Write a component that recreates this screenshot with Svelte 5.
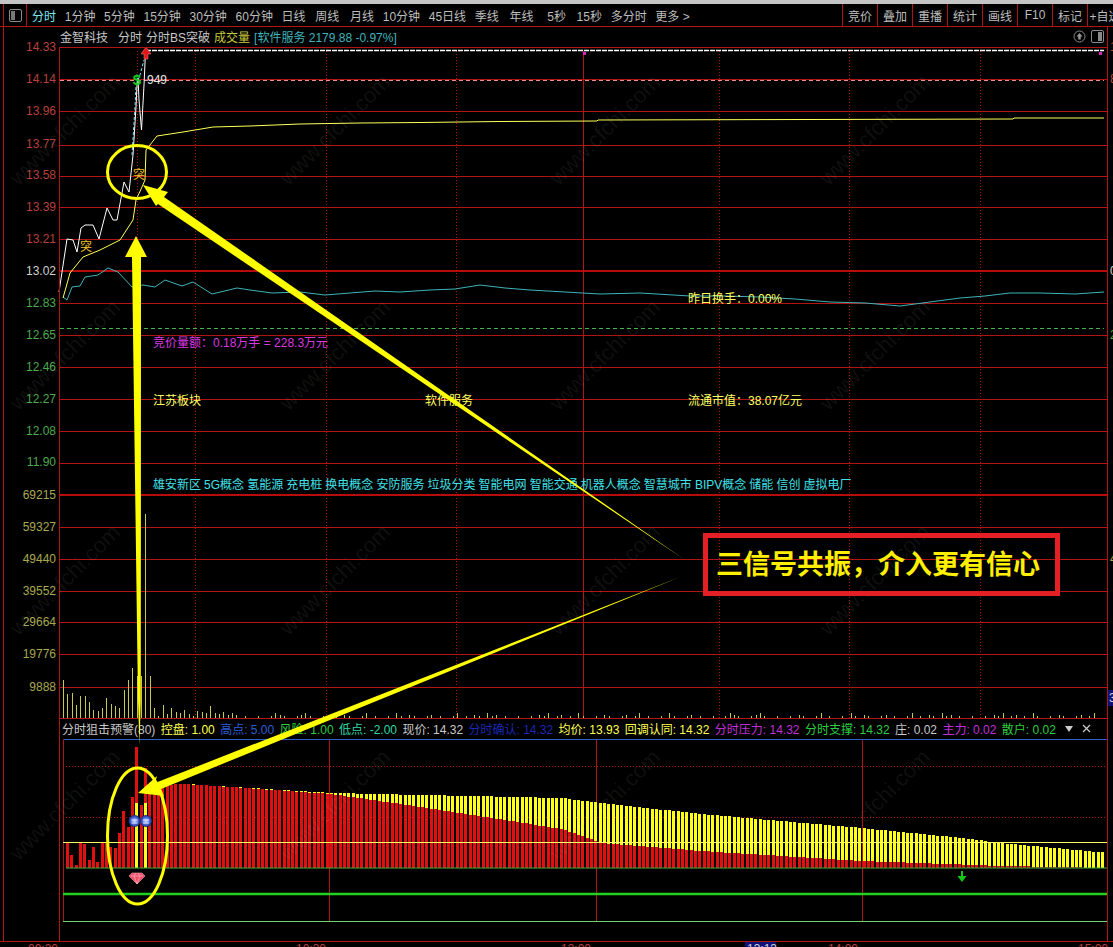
<script>
  const tabs = ["分时", "1分钟", "5分钟", "15分钟", "30分钟", "60分钟", "日线", "周线", "月线", "10分钟", "45日线", "季线", "年线", "5秒", "15秒", "多分时", "更多 >"];
  const tools = ["竞价", "叠加", "重播", "统计", "画线", "F10", "标记", "+自选"];

  const axis = [
    ["14.33", 51, "up"], ["14.14", 83, "up"], ["13.96", 115, "up"], ["13.77", 148, "up"],
    ["13.58", 179, "up"], ["13.39", 211, "up"], ["13.21", 243, "up"], ["13.02", 275, "flat"],
    ["12.83", 307, "down"], ["12.65", 339, "down"], ["12.46", 371, "down"], ["12.27", 403, "down"],
    ["12.08", 435, "down"], ["11.90", 466, "down"], ["69215", 499, "vol"], ["59327", 531, "vol"],
    ["49440", 563, "vol"], ["39552", 595, "vol"], ["29664", 626, "vol"], ["19776", 658, "vol"], ["9888", 691, "vol"]
  ];
  const rows = [79, 111, 145, 176, 207, 239, 303, 335, 367, 399, 431, 463, 527, 559, 591, 622, 654, 687];
  const dotted = [195, 326, 456, 719, 849, 980];

  const pts = (list) => list.map((p) => p.join(",")).join(" ");

  const price = pts([[59, 292], [67, 239], [73, 240], [77, 252], [81, 228], [85, 225], [93, 225], [99, 239], [107, 208], [113, 220], [117, 220], [124, 182], [129, 192], [133, 155], [136, 107], [137, 85], [138, 78], [139, 100], [141.5, 130], [144, 85], [145.5, 52]]);
  const avg = pts([[63, 298], [70, 273], [83, 257], [100, 250], [120, 240], [133, 220], [136, 200], [142, 187], [145, 180], [146, 150], [157, 136], [183, 132], [213, 127], [250, 126], [300, 124], [360, 123], [420, 122.5], [500, 121.5], [597, 121], [598, 120], [808, 119.5], [1013, 119], [1014, 118], [1104, 118]]);
  const index = pts([[63, 297], [67, 300], [72, 287], [80, 286], [85, 277], [98, 275], [108, 268], [118, 272], [132, 287], [143, 285], [155, 287], [165, 280], [182, 286], [193, 282], [212, 294], [237, 288], [250, 290], [272, 293], [300, 292], [325, 295], [350, 293], [375, 291], [400, 292], [430, 290], [455, 289], [480, 285], [505, 288], [530, 290], [565, 292], [600, 294], [640, 293], [690, 296], [725, 296], [760, 297], [795, 299], [830, 302], [865, 303], [900, 306], [930, 302], [960, 298], [985, 296], [1010, 293], [1040, 293], [1075, 294], [1104, 292]]);

  // volume bars, tallest at the open then dying away
  const volTops = [680, 694, 693, 705, 696, 696, 702, 710, 711, 708, 698, 704, 706, 708, 690, 680, 668, 676, 676, 514, 676, 708, 716, 705, 714, 708, 712, 713, 710, 714, 716, 711, 712, 713, 706, 713, 714, 712, 715, 713];
  const volume = Array.from({ length: 240 }, (_, i) => {
    const x = Math.round(63 + i * 4.33) + 0.5;
    if (i < volTops.length) return { x, top: volTops[i] };
    return { x, top: i % 3 === 0 ? 716 : i % 7 === 0 ? 713 : i % 5 === 0 ? 715 : 718 };
  });

  const lerp = (list, x) => {
    for (let i = 1; i < list.length; i++) {
      if (x <= list[i][0]) {
        const [x0, y0] = list[i - 1];
        const [x1, y1] = list[i];
        return y0 + ((y1 - y0) * (x - x0)) / (x1 - x0);
      }
    }
    return list[list.length - 1][1];
  };

  const base = 868;
  const redStart = [843, 855, 865, 843, 844, 860, 847, 862, 843, 843, 847, 848, 833, 811, 827, 797, 747, 805, 768, 785, 795, 788, 787, 785, 785, 784, 784];
  const totalLine = [[184, 784], [330, 793], [560, 798], [600, 803], [700, 814], [860, 828], [960, 838], [1000, 843], [1107, 853]];
  const redLine = [[184, 784], [330, 794], [420, 807], [560, 829], [600, 843], [700, 851], [860, 861], [1000, 866], [1060, 867], [1107, 868]];
  const bars = Array.from({ length: 240 }, (_, i) => {
    const x = 66 + i * 4.33;
    const red = i < redStart.length ? redStart[i] : Math.round(lerp(redLine, x));
    const total = i < redStart.length ? red : Math.round(lerp(totalLine, x));
    return { x: Math.round(x), red, total: Math.min(total, red) };
  });

  const marks = [];
  for (let r = 0; r < 4; r++) {
    for (let c = 0; c < 4; c++) marks.push({ x: 70 + c * 270, y: 135 + r * 225 });
  }
</script>

<div class="app">
  <div class="strip"></div>

  <div class="toolbar">
    <div class="side">
      <svg width="13" height="13" viewBox="0 0 13 13">
        <rect x="0.5" y="0.5" width="12" height="12" rx="1.5" fill="none" stroke="#8a8a8a" />
        <rect x="2" y="2" width="4" height="9" fill="#777" />
      </svg>
    </div>
    <div class="tabs">
      {#each tabs as tab, i}
        <span class="tab" class:active={i === 0}>{tab}</span>
      {/each}
    </div>
    {#each tools as tool}
      <span class="tool">{tool}</span>
    {/each}
  </div>

  <div class="chart">
    <div class="title">
      <span class="gap">金智科技</span>
      <span>分时</span>
      <span>分时BS突破</span>
      <span class="olive">成交量</span>
      <span class="teal">[软件服务 2179.88 -0.97%]</span>
      <span class="title-icons">
        <svg width="13" height="13" viewBox="0 0 13 13">
          <circle cx="6.5" cy="6.5" r="5.5" fill="none" stroke="#8a8a8a" />
          <path d="M6.5 3 L9.5 6.5 H7.7 V9.5 H5.3 V6.5 H3.5 Z" fill="#999" />
        </svg>
        <svg width="13" height="13" viewBox="0 0 13 13">
          <rect x="0.5" y="0.5" width="12" height="12" rx="1.5" fill="none" stroke="#8a8a8a" />
          <rect x="7" y="2" width="4" height="9" fill="#888" />
        </svg>
      </span>
    </div>

    <svg class="main" width="1113" height="673" viewBox="0 45 1113 673">
      {#each rows as y}
        <line x1="60" x2="1108" y1={y + 0.5} y2={y + 0.5} class="grid" />
      {/each}
      <line x1="60" x2="1108" y1="271" y2="271" class="grid-strong" />
      <line x1="60" x2="1108" y1="495" y2="495" class="grid-strong" />
      {#each dotted as x}
        <line x1={x + 0.5} x2={x + 0.5} y1="51" y2="718" class="grid-dot" />
      {/each}
      <line x1="137.5" x2="137.5" y1="51" y2="240" class="grid-dot" />
      <line x1="583.5" x2="583.5" y1="51" y2="718" class="grid" />

      <line x1="146" x2="1104" y1="50.5" y2="50.5" stroke="#fff" stroke-width="1.5" stroke-dasharray="5 1" />
      <line x1="60" x2="1104" y1="80.5" y2="80.5" stroke="#f09090" stroke-dasharray="4 3" />
      <line x1="60" x2="1104" y1="328.5" y2="328.5" stroke="#46b446" stroke-dasharray="4 3" />

      <polyline points={index} class="line" stroke="#3fb3b8" />
      <polyline points={avg} class="line" stroke="#ffff55" />
      <polyline points={price} class="line" stroke="#fff" stroke-width="1.7" />
      <polyline points="132,155 135,107 136,85 140,75 144,60" class="line" stroke="#7fe6ff" stroke-dasharray="3 2" />

      {#each volume as bar}
        <line x1={bar.x} x2={bar.x} y1={bar.top} y2="718" stroke="#c8c84e" />
      {/each}

      {#each axis as [label, y, tone]}
        <text x="56" {y} text-anchor="end" class="axis {tone}">{label}</text>
      {/each}
      <text x="1110" y="51" class="axis up">1.28%</text>
      <text x="1110" y="83" class="axis up">8.98%</text>
      <text x="1110" y="275" class="axis flat">0.00%</text>
      <text x="1110" y="339" class="axis down">2.85%</text>
      <text x="1110" y="563" class="axis vol">49440</text>
      <rect x="1108" y="690" width="5" height="16" fill="#10107a" />
      <text x="1109" y="702" class="axis flat">3</text>

      <polygon points="146,47 151,54 148,54 148,59 144,59 144,54 141,54" fill="#e01818" stroke="#ff8080" stroke-width="0.5" />
      <text x="137" y="85" text-anchor="middle" class="dollar">$</text>
      <text x="147" y="84" class="note white">949</text>
      <text x="86" y="251" text-anchor="middle" class="note amber">突</text>
      <text x="139" y="179" text-anchor="middle" class="note amber">突</text>
      <rect x="583" y="52" width="3" height="3" fill="#e020c0" />
      <rect x="1099" y="52" width="3" height="3" fill="#e020c0" />

      <text x="688" y="303" class="note gold">昨日换手：0.00%</text>
      <text x="153" y="347" class="note pink">竞价量额：0.18万手 = 228.3万元</text>
      <text x="153" y="405" class="note gold">江苏板块</text>
      <text x="425" y="405" class="note gold">软件服务</text>
      <text x="688" y="405" class="note gold">流通市值：38.07亿元</text>
      <text x="153" y="489" class="note cyan concepts">雄安新区 5G概念 氢能源 充电桩 换电概念 安防服务 垃圾分类 智能电网 智能交通 机器人概念 智慧城市 BIPV概念 储能 信创 虚拟电厂</text>
    </svg>

    <div class="legend">
      <span class="silver">分时狙击预警(80)</span>
      <span class="yellow">控盘: 1.00</span>
      <span class="blue">高点: 5.00</span>
      <span class="green">风险: 1.00</span>
      <span class="mint">低点: -2.00</span>
      <span class="silver">现价: 14.32</span>
      <span class="navy">分时确认: 14.32</span>
      <span class="yellow">均价: 13.93</span>
      <span class="yellow">回调认同: 14.32</span>
      <span class="purple">分时压力: 14.32</span>
      <span class="green">分时支撑: 14.32</span>
      <span class="silver">庄: 0.02</span>
      <span class="purple">主力: 0.02</span>
      <span class="green">散户: 0.02</span>
      <span class="legend-icons">
        <svg width="8" height="6" viewBox="0 0 8 6"><path d="M0 0 H8 L4 6 Z" fill="#ccc" /></svg>
        <svg width="9" height="9" viewBox="0 0 9 9"><path d="M1 1 L8 8 M8 1 L1 8" stroke="#ccc" stroke-width="1.2" /></svg>
      </span>
    </div>

    <svg class="sub" width="1113" height="208" viewBox="0 739 1113 208">
      <defs>
        <radialGradient id="ball">
          <stop offset="0" stop-color="#cfd8ff" />
          <stop offset="0.7" stop-color="#3a55c8" />
          <stop offset="1" stop-color="#16246a" />
        </radialGradient>
      </defs>
      <line x1="63" x2="1108" y1="739.5" y2="739.5" stroke="#2a62c8" />
      <line x1="63" x2="1108" y1="766.5" y2="766.5" class="grid-dot" />
      <line x1="63" x2="1108" y1="817.5" y2="817.5" class="grid-dot" />
      <line x1="63.5" x2="63.5" y1="739" y2="921" class="grid" />
      {#each [329.5, 596.5, 862.5] as x}
        <line x1={x} x2={x} y1="740" y2="921" class="grid" />
      {/each}

      {#each bars as bar}
        {#if bar.total < bar.red}
          <rect x={bar.x} y={bar.total} width="3" height={base - bar.total} fill="#ffff1e" />
        {/if}
        <rect x={bar.x} y={bar.red} width="3" height={base - bar.red} fill="#e01010" />
      {/each}
      <rect x="135" y="803" width="3" height="65" fill="#ffff1e" />
      <rect x="144" y="803" width="3" height="65" fill="#ffff1e" />

      <line x1="63" x2="1108" y1="842.5" y2="842.5" stroke="#ffff60" />
      <line x1="66" x2="1108" y1="868" y2="868" stroke="#3cb43c" stroke-width="1.2" />
      <line x1="63" x2="1108" y1="894" y2="894" stroke="#22d022" stroke-width="2.4" />
      <line x1="63" x2="1108" y1="921.5" y2="921.5" stroke="#6fd06f" />

      <circle cx="134.5" cy="821" r="6" fill="url(#ball)" />
      <circle cx="146" cy="821" r="6" fill="url(#ball)" />
      <path d="M131.5 820 h6 M131.5 823 h6 M143 820 h6 M143 823 h6" stroke="#dfe6ff" />
      <polygon points="132,873 142,873 145,876 137,884 129,876" fill="#f0506a" stroke="#ff9aaa" stroke-width="0.6" />
      <path d="M131 876 H143 M137 884 L134 876 L136 873 M137 884 L140 876 L138 873" stroke="#ffc4cc" stroke-width="0.6" fill="none" />
      <path d="M961 871 h2 v5 h3.5 L962 882 L957.500 876 h3.500 Z" fill="#16c816" />

      <text x="28" y="953" class="axis up">09:30</text>
      <text x="296" y="953" class="axis up">10:30</text>
      <text x="561" y="953" class="axis up">13:00</text>
      <text x="828" y="953" class="axis up">14:00</text>
      <text x="1078" y="953" class="axis up">15:00</text>
      <rect x="745" y="941" width="31" height="6" fill="#10107a" />
      <text x="747" y="953" class="axis flat">13:13</text>
    </svg>

    <svg class="overlay" width="1113" height="920" viewBox="0 27 1113 920">
      <g class="marks">
        {#each marks as m}
          <text x={m.x} y={m.y} text-anchor="middle" transform="rotate(-45 {m.x} {m.y})">www.cfchi.com</text>
        {/each}
      </g>

      <line x1="3.5" x2="3.5" y1="27" y2="941" class="grid" />
      <line x1="59.5" x2="59.5" y1="47" y2="941" class="grid" />
      <line x1="59.5" x2="1108" y1="47.500" y2="47.500" class="grid" />
      <line x1="59.5" x2="1108" y1="718.5" y2="718.5" class="grid" />
      <line x1="1107.5" x2="1107.5" y1="27" y2="941" class="grid" />
      <line x1="0" x2="1113" y1="941.5" y2="941.5" class="grid" />

      <polygon points="136,236 147,257 141,257 140.800,700 139.500,745 138,700 132,257 125,257" fill="#ffff00" />
      <polygon points="143,185 168,192 164,197 685,560 158,204 156,206" fill="#ffff00" />
      <polygon points="138,793 157,776 155,783 680,577 161,789 164,796" fill="#ffff00" />
      <ellipse cx="137" cy="172" rx="29.500" ry="26.500" class="ring" />
      <ellipse cx="137.500" cy="836" rx="30" ry="68" class="ring" />
    </svg>

    <div class="callout">三信号共振，介入更有信心</div>
  </div>
</div>

<style>
  :global(body) {
    margin: 0;
    background: #000;
  }

  .app {
    width: 1113px;
    height: 947px;
    overflow: hidden;
    background: #000;
    font-family: "Liberation Sans", "Noto Sans CJK SC", sans-serif;
    font-size: 12px;
    color: #c8c8c8;
    display: flex;
    flex-direction: column;
  }

  .strip {
    height: 4px;
    flex: none;
    background: #c4c4c4;
  }

  .toolbar {
    height: 22px;
    flex: none;
    display: flex;
    align-items: center;
    border-bottom: 1px solid #b01414;
    padding-left: 3px;
  }

  .side {
    width: 24px;
    height: 100%;
    flex: none;
    box-sizing: border-box;
    display: flex;
    align-items: center;
    justify-content: center;
    border-left: 1px solid #b01414;
    border-right: 1px solid #b01414;
  }

  .tabs {
    width: 815px;
    flex: none;
    display: flex;
    gap: 8.7px;
    padding-left: 5px;
    box-sizing: border-box;
    white-space: nowrap;
  }

  .tab {
    color: #bdbdbd;
  }

  .tab:nth-child(8) {
    margin-left: 1px;
  }

  .tab:nth-child(9) {
    margin-left: 2px;
  }

  .tab:nth-child(13) {
    margin-left: 2px;
  }

  .tab:nth-child(14) {
    margin-left: 5px;
  }

  .tab:nth-child(15) {
    margin-left: 2px;
  }

  .tab.active {
    color: #7fe6f0;
  }

  .tool {
    width: 35px;
    height: 100%;
    flex: none;
    box-sizing: border-box;
    display: flex;
    align-items: center;
    justify-content: center;
    white-space: nowrap;
    border-left: 1px solid #b01414;
    color: #bdbdbd;
  }

  .chart {
    position: relative;
    flex: 1;
  }

  .title {
    height: 18px;
    padding-left: 60px;
    display: flex;
    align-items: center;
    gap: 4px;
    white-space: nowrap;
  }

  .gap {
    margin-right: 6px;
  }

  .olive {
    color: #c8c83c;
  }

  .teal {
    color: #3fb3b8;
  }

  .title-icons {
    margin-left: auto;
    margin-right: 9px;
    display: flex;
    gap: 5px;
  }

  .main,
  .sub {
    display: block;
    overflow: visible;
  }

  .legend {
    height: 21px;
    box-sizing: border-box;
    padding: 0 22px 0 62px;
    display: flex;
    align-items: center;
    gap: 5.4px;
    white-space: nowrap;
  }

  .legend-icons {
    margin-left: auto;
    display: flex;
    align-items: center;
    gap: 9px;
  }

  .silver {
    color: #c8c8c8;
  }

  .yellow {
    color: #ffff50;
  }

  .blue {
    color: #2a5ed8;
  }

  .green {
    color: #2ecc40;
  }

  .mint {
    color: #2ed8a0;
  }

  .navy {
    color: #1a28b4;
  }

  .purple {
    color: #c030d8;
  }

  .overlay {
    position: absolute;
    inset: 0;
    pointer-events: none;
  }

  .grid {
    stroke: #b01414;
    stroke-width: 1;
  }

  .grid-strong {
    stroke: #b80c0c;
    stroke-width: 2;
  }

  .grid-dot {
    stroke: #a81010;
    stroke-width: 1;
    stroke-dasharray: 1 2;
  }

  .line {
    fill: none;
    stroke-width: 1;
  }

  .ring {
    fill: none;
    stroke: #ffff00;
    stroke-width: 3;
  }

  .marks text {
    font-size: 22px;
    fill: #fff;
    fill-opacity: 0.07;
  }

  .axis {
    font-size: 12px;
  }

  .up {
    fill: #b8403c;
  }

  .flat {
    fill: #d0d0d0;
  }

  .down {
    fill: #4ea84e;
  }

  .vol {
    fill: #a8a850;
  }

  .note {
    font-size: 12px;
  }

  .white {
    fill: #e8e8e8;
  }

  .gold {
    fill: #ffff60;
  }

  .amber {
    fill: #f0c428;
  }

  .pink {
    fill: #d838e0;
  }

  .cyan {
    fill: #40e0e8;
  }

  .concepts {
    word-spacing: -0.25px;
  }

  .dollar {
    font-size: 15px;
    font-weight: bold;
    fill: #1cc81c;
  }

  .callout {
    position: absolute;
    left: 703px;
    top: 506px;
    width: 357px;
    height: 63px;
    box-sizing: border-box;
    border: 5px solid #e41f26;
    padding: 0 0 5px 8px;
    display: flex;
    align-items: center;
    font-family: "Noto Sans CJK SC", sans-serif;
    font-size: 27px;
    font-weight: bold;
    color: #ffef00;
    white-space: nowrap;
  }
</style>
